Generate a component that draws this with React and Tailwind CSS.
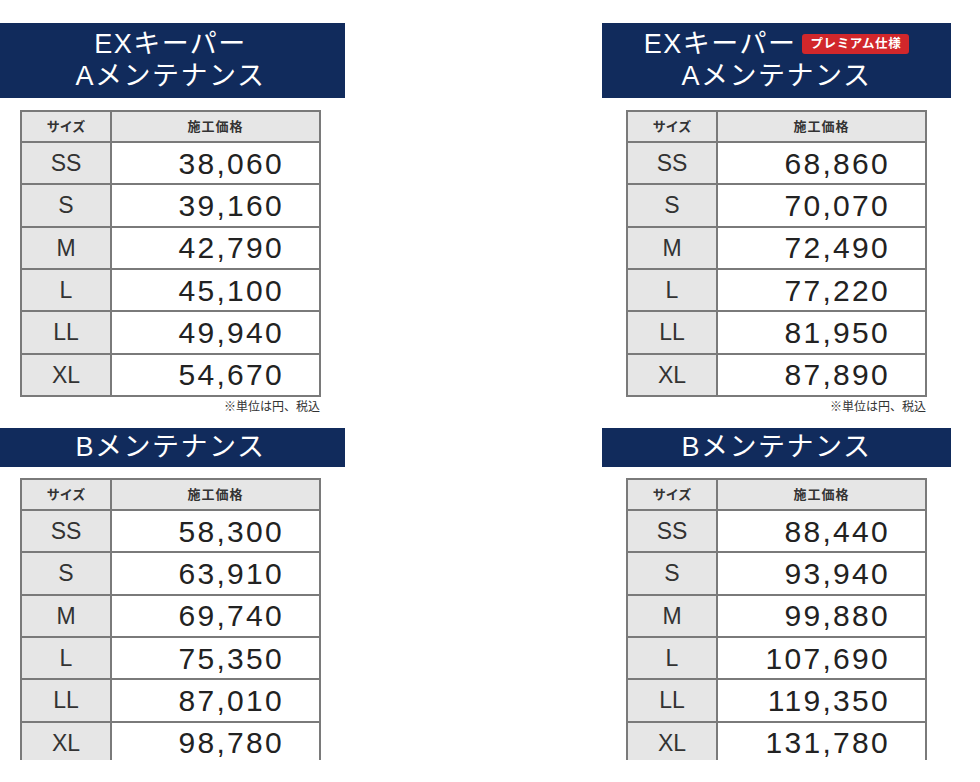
import React from "react";

const FONT = { fontFamily: '"Liberation Sans", "Noto Sans CJK JP", sans-serif' };
const sizes = ["SS", "S", "M", "L", "LL", "XL"];

function Header({ badge, lines }) {
  return (
    <div className="flex h-full flex-col items-center justify-center bg-[#112b5c] pb-[1px] text-white">
      {lines.map((l, i) => (
        <div key={i} className="flex items-center text-[27px] leading-[32px] tracking-[1.5px]">
          <span>{l}</span>
          {badge && i === 0 && (
            <span className="ml-[6px] rounded-[3px] bg-[#d1272b] px-[8px] text-[12.5px] font-bold leading-[20px] tracking-[0.6px]">
              プレミアム仕様
            </span>
          )}
        </div>
      ))}
    </div>
  );
}

function PriceTable({ prices }) {
  return (
    <div className="w-[301px] shrink-0 border-2 border-[#7a7a7a] text-[#222]">
      <div className="flex h-[29px] bg-[#e6e6e6] text-[13px] font-bold text-[#333]">
        <div className="flex w-[90px] items-center justify-center border-r-2 border-[#7a7a7a]">サイズ</div>
        <div className="flex flex-1 items-center justify-center tracking-[1px]">施工価格</div>
      </div>
      {sizes.map((s, i) => (
        <div key={s} className="flex h-[42.33px] border-t-2 border-[#7a7a7a]">
          <div className="flex w-[90px] items-center justify-center border-r-2 border-[#7a7a7a] bg-[#e6e6e6] pt-[1px] text-[23px] leading-none text-[#333]">
            {s}
          </div>
          <div className="flex flex-1 items-center justify-end bg-white pt-[1px] pr-[35px] text-[30px] leading-none tracking-[2.3px]">
            {prices[i]}
          </div>
        </div>
      ))}
    </div>
  );
}

function Column({ badge, a, b, className }) {
  return (
    <div className={"flex w-[349px] shrink-0 flex-col " + className}>
      <div className="h-[75px] shrink-0">
        <Header badge={badge} lines={["EXキーパー", "Aメンテナンス"]} />
      </div>
      <div className="mt-[12px] ml-[24px] shrink-0">
        <PriceTable prices={a} />
      </div>
      <div className="ml-[24px] flex h-[20px] w-[301px] shrink-0 items-center justify-end pr-[1px] text-[12px] text-[#333]">
        ※単位は円、税込
      </div>
      <div className="mt-[11px] h-[39px] shrink-0">
        <div className="flex h-full items-center justify-center bg-[#112b5c] text-[27px] tracking-[1.5px] text-white">
          Bメンテナンス
        </div>
      </div>
      <div className="mt-[11px] ml-[24px] shrink-0">
        <PriceTable prices={b} />
      </div>
    </div>
  );
}

export default function App() {
  return (
    <div className="h-[782px] w-[980px] overflow-hidden bg-white" style={FONT}>
      <div className="flex h-[760px] items-start overflow-hidden pt-[23px]">
        <Column
          className="ml-[-4px]"
          a={["38,060", "39,160", "42,790", "45,100", "49,940", "54,670"]}
          b={["58,300", "63,910", "69,740", "75,350", "87,010", "98,780"]}
        />
        <Column
          className="ml-[257px]"
          badge
          a={["68,860", "70,070", "72,490", "77,220", "81,950", "87,890"]}
          b={["88,440", "93,940", "99,880", "107,690", "119,350", "131,780"]}
        />
      </div>
    </div>
  );
}
